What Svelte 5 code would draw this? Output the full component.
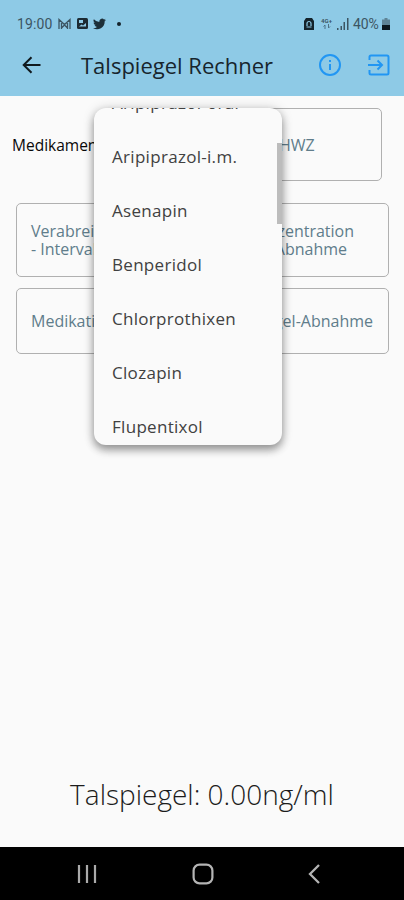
<script>
  const drugs = ['Aripiprazol-oral', 'Aripiprazol-i.m.', 'Asenapin', 'Benperidol', 'Chlorprothixen', 'Clozapin', 'Flupentixol'];
</script>

<div class="screen">
  <header>
    <div class="status">
      <span class="clock">19:00</span>
      <svg class="mail" width="13" height="12" viewBox="0 0 13 12" fill="none" stroke="#3c5563" stroke-width="1.3"><path d="M1 11V1.5l5.5 5 5.5-5V11M3.5 11V5M9.5 11V5M3.5 10l3-3 3 3" /></svg>
      <svg class="photo" width="11" height="11" viewBox="0 0 11 11"><rect width="11" height="11" rx="1.5" fill="#1d2b33" /><path d="M2 2h4v3H2zM2 8.5l2.5-2L6 7.5 9 5v3.5z" fill="#8ecae6" /></svg>
      <svg class="bird" width="13" height="12" viewBox="0 0 24 21" fill="#1d2f39"><path d="M24 3a10 10 0 0 1-2.8.8A5 5 0 0 0 23.300 1a10 10 0 0 1-3 1.200 5 5 0 0 0-8.500 4.500A14 14 0 0 1 1.700 1.500a5 5 0 0 0 1.500 6.600 5 5 0 0 1-2.200-.6 5 5 0 0 0 4 4.900 5 5 0 0 1-2.300.1 5 5 0 0 0 4.600 3.400A10 10 0 0 1 0 18a14 14 0 0 0 21.500-12.500A10 10 0 0 0 24 3z" /></svg>
      <i class="dot"></i>
      <span class="grow"></span>
      <svg class="alarm" width="10" height="12" viewBox="0 0 10 12"><path d="M2 0h6l2 3v9H0V3z" fill="#14232b" /><path d="M3 8V5.500a2 2 0 0 1 4 0V8" fill="none" stroke="#8ecae6" stroke-width="1.200" /><path d="M2.500 9h5" stroke="#8ecae6" /></svg>
      <span class="net"><b>4G+</b><svg width="8" height="5" viewBox="0 0 8 5" fill="none" stroke="#4d7184" stroke-width="1"><path d="M2 5V1L.5 2.500M5.500 0v4L7 2.500" /></svg></span>
      <svg class="signal" width="12" height="12" viewBox="0 0 12 12" fill="#3c5563"><path d="M0 10h1.500v2H0zM3.500 8H5v4H3.500zM6.500 4H8v8H6.500zM10 0h1.500v12H10z" /></svg>
      <span class="percent">40%</span>
      <svg class="battery" width="8" height="12" viewBox="0 0 8 12"><path d="M2.500 0h3v1.500H8V12H0V1.500h2.500z" fill="#5f8496" /><path d="M0 7h8v5H0z" fill="#0c171d" /></svg>
    </div>
    <div class="bar">
      <svg class="back" width="20" height="18" viewBox="0 0 20 18" fill="none" stroke="#10191e" stroke-width="2"><path d="M18.500 9H2M9.500 1.200L1.700 9l7.800 7.800" /></svg>
      <h1>Talspiegel Rechner</h1>
      <svg class="info" width="24" height="24" viewBox="0 0 24 24" fill="none" stroke="#2196f3" stroke-width="2"><circle cx="12" cy="12" r="10" /><path d="M12 11v6M12 7v2" /></svg>
      <svg class="exit" width="22" height="22" viewBox="0 0 22 22" fill="none" stroke="#2196f3" stroke-width="2"><path d="M1.500 6V3q0-1.500 1.500-1.500h16q1.500 0 1.500 1.500v16q0 1.500-1.500 1.500H3q-1.500 0-1.500-1.500v-3M0 11h14M9.500 6.500L14 11l-4.500 4.500" /></svg>
    </div>
  </header>

  <main>
    <div class="top-row">
      <span class="label">Medikament</span>
      <div class="field hwz">HWZ</div>
    </div>
    <div class="field pair tall">
      <div>Verabreichung<br />- Intervall</div>
      <div class="right"><span>Konzentration</span><span class="second">Abnahme</span></div>
    </div>
    <div class="field pair">
      <div>Medikation</div>
      <div class="right"><span class="third">Spiegel-Abnahme</span></div>
    </div>
    <p class="result"><span>Talspiegel: 0.00ng/ml</span></p>
  </main>

  <nav>
    <svg width="20" height="20" viewBox="0 0 20 20" stroke="#aaa" stroke-width="2.200"><path d="M2 1v18M10 1v18M18 1v18" /></svg>
    <svg width="22" height="22" viewBox="0 0 22 22" fill="none" stroke="#b4b4b4" stroke-width="2.200"><rect x="1.600" y="1.600" width="18.800" height="18.800" rx="6" /></svg>
    <svg width="12" height="20" viewBox="0 0 12 20" fill="none" stroke="#b4b4b4" stroke-width="2.300"><path d="M11 1L2 10l9 9" /></svg>
  </nav>

  <div class="menu">
    <ul>
      {#each drugs as drug}<li>{drug}</li>{/each}
    </ul>
    <i class="thumb"></i>
  </div>
</div>

<style>
  :global(body) { margin: 0; }
  .screen { position: relative; width: 404px; height: 900px; display: flex; flex-direction: column; overflow: hidden; background: #fafafa; font-family: "Open Sans", "Noto Sans", sans-serif; }
  header { height: 96px; background: #8ecae6; flex: none; }
  .status { display: flex; align-items: center; height: 47px; padding: 0 14px 0 17px; box-sizing: border-box; font: 14px/16px Roboto, sans-serif; color: #3c5563; }
  .status svg { flex: none; }
  .clock { width: 36px; letter-spacing: .1px; }
  .mail { margin-left: 5px; }
  .photo { margin-left: 6px; }
  .bird { margin-left: 5px; }
  .dot { width: 4px; height: 4px; margin-left: 11px; border-radius: 50%; background: #14232b; }
  .grow { flex: 1; }
  .net { display: flex; flex-direction: column; align-items: center; width: 13px; margin-left: 6px; }
  .net b { font-size: 6px; line-height: 6px; }
  .signal { margin-left: 4px; }
  .percent { margin-left: 4px; width: 28px; letter-spacing: -.1px; }
  .battery { margin-left: 1px; }
  .bar { display: flex; align-items: center; height: 36px; padding: 0 14px 0 22px; }
  h1 { flex: 1; margin: 0 0 0 39px; font-size: 22px; line-height: 30px; font-weight: 400; color: #17252d; white-space: nowrap; }
  .exit { margin-left: 26px; }
  main { height: 751px; display: flex; flex-direction: column; box-sizing: border-box; padding-top: 12px; color: #607d8b; font-size: 16px; line-height: 18px; }
  .top-row { display: flex; align-items: center; padding: 0 22px 0 12px; height: 73px; }
  .label { flex: 1; color: #080808; font-size: 15.500px; }
  .field { box-sizing: border-box; border: 1px solid #b0b0b0; border-radius: 5px; }
  .hwz { display: flex; align-items: center; width: 118px; height: 73px; padding-left: 14px; }
  .pair { display: flex; align-items: center; justify-content: space-between; margin: 11px 15px 0 16px; height: 66px; padding: 0 15px 0 14px; white-space: nowrap; }
  .tall { margin-top: 22px; height: 74px; }
  .right { display: flex; flex-direction: column; align-items: flex-end; }
  .right span { margin-right: 19px; }
  .right .second { margin-right: 26px; }
  .right .third { margin-right: 0; }
  .result { margin: auto 0 36px; text-align: center; font-size: 28px; line-height: 34px; color: #1c1c1c; font-weight: 300; }
  nav { height: 53px; display: flex; align-items: center; padding: 0 84px 0 77px; justify-content: space-between; background: #000; box-sizing: border-box; }
  .menu { position: absolute; left: 94px; top: 108px; width: 188px; height: 337px; overflow: visible; border-radius: 12px; background: #fafafa; box-shadow: 0 5px 9px #0005, 0 1px 12px #0003; }
  .menu ul { list-style: none; margin: 0; padding: 0 0 0 18px; height: 337px; overflow: hidden; border-radius: 12px; display: flex; flex-direction: column; }
  .menu li { flex: none; height: 54px; line-height: 54px; font-size: 17px; color: #414141; letter-spacing: .3px; white-space: nowrap; }
  .menu li:first-child { margin-top: -32px; }
  .thumb { position: absolute; right: 0; top: 35px; width: 5px; height: 81px; background: #bcbcbc; }
</style>
